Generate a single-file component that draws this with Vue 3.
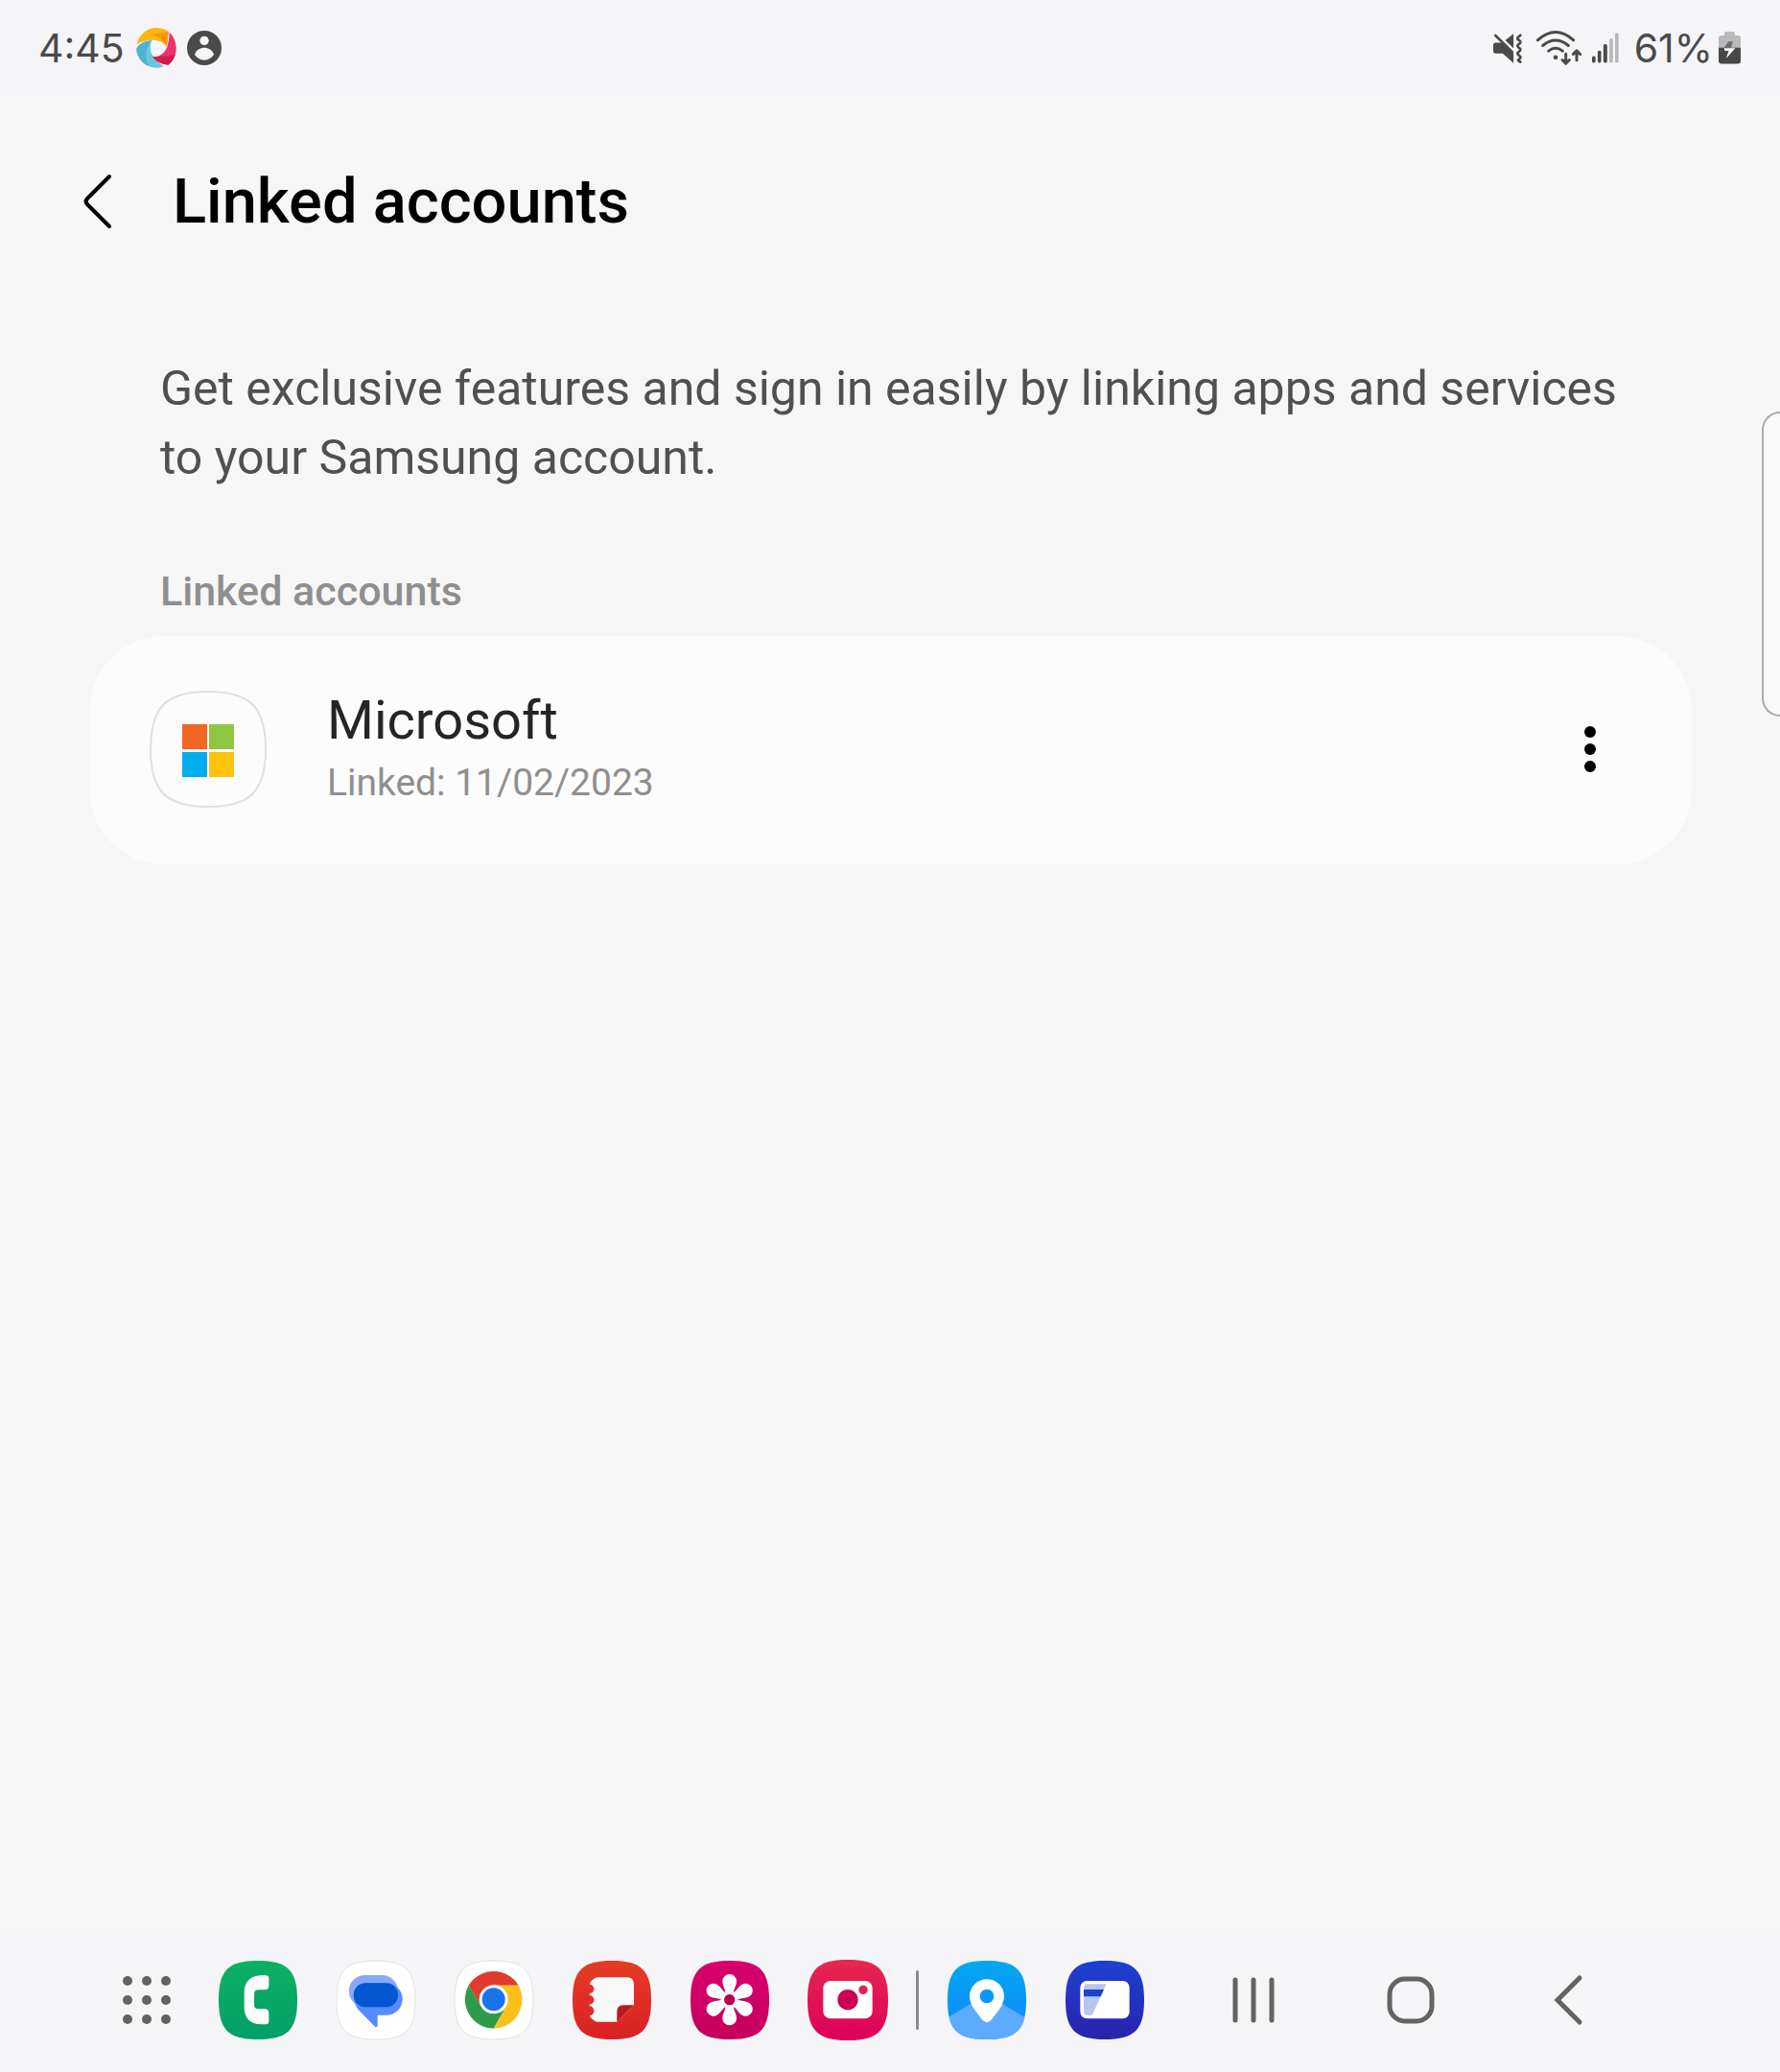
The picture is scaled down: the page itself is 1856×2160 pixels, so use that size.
<script setup>
const squircle = 'M123 0C216 0 246 30 246 123S216 246 123 246 0 216 0 123 30 0 123 0Z'
const petals = [0, 60, 120, 180, 240, 300]
const launcherDots = [5, 25, 45]
const account = { name: 'Microsoft', linked: 'Linked: 11/02/2023' }
</script>

<template>
  <div class="screen">
    <header class="status">
      <div class="status-left">
        <time class="status-text">4:45</time>
        <svg class="swirl" viewBox="0 0 126 126" aria-hidden="true">
          <path fill="#fbb811" d="M2 52C8 20 35 0 63 0 78 0 92 5 101 11 99 28 99 42 95 58 85 43 66 38 48 38 30 39 14 44 2 52Z" />
          <path fill="#fb960d" d="M46 22C66 16 86 14 101 11 99 28 99 42 95 58 88 40 70 26 46 22Z" />
          <path fill="#4fb3cd" d="M0 66C8 50 25 41 49 39 40 55 42 73 52 88 60 99 72 112 85 121 50 134 4 112 0 66Z" />
          <path fill="#6cc6dd" d="M49 39C40 55 42 73 52 88 60 99 72 112 85 121 68 127 52 124 38 118 26 92 30 60 49 39Z" />
          <path fill="#ee3168" d="M104 14C122 30 130 60 122 85 118 98 110 110 100 116 80 114 62 106 52 90 72 92 88 80 96 62 101 46 104 30 104 14Z" />
          <path fill="#d01f4c" d="M52 90C76 92 100 88 122 84 118 98 110 110 100 116 80 114 62 106 52 90Z" />
        </svg>
        <svg class="person" viewBox="0 0 108 108" aria-hidden="true">
          <circle cx="54" cy="54" r="54" fill="#4a4a4a" />
          <circle cx="54" cy="31" r="14" fill="#f5f5f8" />
          <path fill="#f5f5f8" d="M24 75C28 60 42 53 54 53S80 60 84 75C76 87 66 92 54 92S32 87 24 75Z" />
        </svg>
      </div>
      <div class="status-right">
        <svg class="mute" viewBox="0 0 91 92" aria-hidden="true">
          <path fill="#4a4a4a" d="M0 35Q0 28 7 28H27L64 62V92L30 62H7Q0 62 0 55ZM64 0V45L38 20Z" />
          <path d="M7 5 60 57M86 4 78 11Q75 15 79 18L84 22Q88 26 84 30L79 34Q75 38 79 42L84 46Q88 50 84 54L79 58Q75 62 79 66L84 70Q88 74 84 78L79 82Q77 84 86 89" fill="none" stroke="#4a4a4a" stroke-width="8" stroke-linecap="round" />
        </svg>
        <svg class="wifi" viewBox="0 0 141 107" aria-hidden="true">
          <g fill="none" stroke="#4a4a4a" stroke-width="9" stroke-linecap="round" stroke-linejoin="round">
            <path d="M4 29Q60-21 116 29M20 46Q60 13 100 46M38 63Q60 46 82 63" />
            <path d="M92 72V101M81 91 92 102 103 91M126 92V63M115 73 126 62 137 73" />
          </g>
          <circle cx="60" cy="83" r="7" fill="#4a4a4a" />
        </svg>
        <svg class="signal" viewBox="0 0 85 96" aria-hidden="true">
          <g fill="#4a4a4a">
            <rect x="0" y="74" width="11" height="21" rx="5" />
            <rect x="18" y="56" width="11" height="39" rx="5" />
            <rect x="36" y="36" width="12" height="59" rx="5" />
          </g>
          <g fill="#b8b8ba">
            <rect x="55" y="18" width="11" height="77" rx="5" />
            <rect x="73" y="0" width="11" height="95" rx="5" />
          </g>
        </svg>
        <span class="status-text percent">61%</span>
        <svg class="battery" viewBox="0 0 70 103" aria-hidden="true">
          <path fill="#b9b9bb" d="M18 12V6Q18 0 24 0H46Q52 0 52 6V12H60Q70 12 70 22V54H0V22Q0 12 10 12Z" />
          <path fill="#474747" d="M0 51H70V92Q70 102 60 102H10Q0 102 0 92Z" />
          <path fill="#6c6c6c" d="M31 31H45L39 52H17Z" />
          <path fill="#fff" d="M17 52H53L24 84 32 61H20Z" />
        </svg>
      </div>
    </header>

    <main class="content">
      <div class="title-row">
        <button class="back" type="button" aria-label="Navigate up">
          <svg viewBox="0 0 30 58" aria-hidden="true">
            <path d="M27 3 4 26Q1 29 4 32L27 55" fill="none" stroke="#000" stroke-width="4" stroke-linecap="round" />
          </svg>
        </button>
        <h1>Linked accounts</h1>
      </div>
      <p class="intro">Get exclusive features and sign in easily by linking apps and services to your Samsung account.</p>
      <h2>Linked accounts</h2>
      <section class="card">
        <svg class="brand" viewBox="0 0 122 122" aria-hidden="true">
          <path d="M61 1C105 1 121 17 121 61S105 121 61 121 1 105 1 61 17 1 61 1Z" fill="#fcfcfc" stroke="#dfdfdf" stroke-width="2" />
          <rect x="34" y="35" width="26" height="26" fill="#f36523" />
          <rect x="62" y="35" width="26" height="26" fill="#8dc63f" />
          <rect x="34" y="64" width="26" height="26" fill="#00adef" />
          <rect x="62" y="64" width="26" height="26" fill="#ffc20e" />
        </svg>
        <div class="account">
          <span class="name">{{ account.name }}</span>
          <span class="linked">{{ account.linked }}</span>
        </div>
        <button class="more" type="button" aria-label="More options">
          <svg viewBox="0 0 12 48" aria-hidden="true">
            <circle cx="6" cy="6" r="6" />
            <circle cx="6" cy="24" r="6" />
            <circle cx="6" cy="42" r="6" />
          </svg>
        </button>
      </section>
    </main>

    <div class="edge-handle"></div>

    <nav class="taskbar">
      <button class="launcher" type="button" aria-label="All apps">
        <svg viewBox="0 0 50 50" aria-hidden="true">
          <template v-for="y in launcherDots" :key="y">
            <circle v-for="x in launcherDots" :key="x" :cx="x" :cy="y" r="5" fill="#636363" />
          </template>
        </svg>
      </button>

      <div class="apps">
        <button class="app" type="button" aria-label="Phone">
          <svg viewBox="0 0 246 246" aria-hidden="true">
            <defs><linearGradient id="phone" x2="0" y2="1"><stop stop-color="#0bb161" /><stop offset="1" stop-color="#029f6a" /></linearGradient></defs>
            <path :d="squircle" fill="url(#phone)" />
            <path fill="#fff" d="M134 46H147Q157 46 157 56V78Q157 91 144 91H124Q111 91 111 104V138Q111 151 124 151H144Q157 151 157 164V189Q157 199 147 199H134C100 199 80 180 80 146V99C80 66 100 46 134 46Z" />
          </svg>
        </button>
        <button class="app" type="button" aria-label="Messages">
          <svg viewBox="0 0 246 246" aria-hidden="true">
            <path :d="squircle" fill="#fff" stroke="#e2e2e6" stroke-width="3" />
            <path fill="#86a9ff" d="M89 45H142A50 50 0 0 1 192 95V145H89L58 135A50 50 0 0 1 89 45Z" />
            <path fill="#578cff" d="M92 70H156A50 50 0 0 1 156 170H128V203Q127 210 120 206L67 152Q53 134 53 108Z" />
            <rect x="53" y="70" width="139" height="75" rx="37" fill="#0057cf" />
          </svg>
        </button>
        <button class="app" type="button" aria-label="Chrome">
          <svg viewBox="0 0 246 246" aria-hidden="true">
            <path :d="squircle" fill="#fff" stroke="#e2e2e6" stroke-width="3" />
            <path fill="#e03b2e" d="M44 77A91 91 0 0 1 200 77H122L83 143Z" />
            <path fill="#2a9c4a" d="M44 77A91 91 0 0 0 122 212L161 143 83 143Z" />
            <path fill="#fcc118" d="M200 77A91 91 0 0 1 122 212L161 143 122 77Z" />
            <circle cx="122" cy="121" r="45" fill="#fff" />
            <circle cx="122" cy="121" r="36" fill="#1a73e8" />
          </svg>
        </button>
        <button class="app" type="button" aria-label="Notes">
          <svg viewBox="0 0 246 246" aria-hidden="true">
            <defs><linearGradient id="notes" x2="0" y2="1"><stop stop-color="#e53c27" /><stop offset="1" stop-color="#da2124" /></linearGradient></defs>
            <path :d="squircle" fill="url(#notes)" />
            <path fill="#f9f9f9" d="M76 52H170Q192 52 192 74V139L139 191H76Q62 187 53 172C72 170 72 145 53 141V137C72 134 72 111 53 107V103C72 100 72 78 53 73Q62 56 76 52Z" />
            <path fill="#b51b20" d="M192 139H159Q139 139 139 159V191Z" />
          </svg>
        </button>
        <button class="app" type="button" aria-label="Gallery">
          <svg viewBox="0 0 246 246" aria-hidden="true">
            <defs><linearGradient id="gallery" x2="0" y2="1"><stop stop-color="#d8006f" /><stop offset="1" stop-color="#c6005c" /></linearGradient></defs>
            <path :d="squircle" fill="url(#gallery)" />
            <g transform="translate(122 122)" fill="#fff">
              <path v-for="angle in petals" :key="angle" :transform="`rotate(${angle})`" d="M-13-22C-14-36-22-44-22-58A22 22 0 0 1 22-58C22-44 14-36 13-22L0 0Z" />
              <circle r="25" />
              <circle r="17" fill="#b8004f" />
            </g>
          </svg>
        </button>
        <button class="app" type="button" aria-label="Camera">
          <svg viewBox="3 3 246 246" aria-hidden="true">
            <defs><linearGradient id="camera" x2="0" y2="1"><stop stop-color="#e8274f" /><stop offset="1" stop-color="#dc0059" /></linearGradient></defs>
            <path d="M126 0C221 0 252 31 252 126S221 252 126 252 0 221 0 126 31 0 126 0Z" fill="url(#camera)" />
            <rect x="49" y="66" width="154" height="118" rx="23" fill="#fff" />
            <circle cx="126" cy="125" r="32" fill="#cb004f" />
            <circle cx="174" cy="94" r="14" fill="#e6224f" />
          </svg>
        </button>
        <span class="divider"></span>
        <button class="app" type="button" aria-label="Find">
          <svg viewBox="0 0 246 246" aria-hidden="true">
            <defs>
              <linearGradient id="find" x2="0" y2="1"><stop stop-color="#02a9f0" /><stop offset="1" stop-color="#1484ff" /></linearGradient>
              <clipPath id="find-shape"><path :d="squircle" /></clipPath>
            </defs>
            <g clip-path="url(#find-shape)">
              <path d="M0 0H246V246H0Z" fill="url(#find)" />
              <path d="M0 178 123 105 246 180V246H0Z" fill="#5dabff" />
            </g>
            <path fill="#fff" d="M123 58C153 58 177 81 177 111 177 138 156 161 136 186Q123 198 110 186C90 161 69 138 69 111 69 81 93 58 123 58Z" />
            <circle cx="123" cy="111" r="22" fill="#0d98f8" />
          </svg>
        </button>
        <button class="app" type="button" aria-label="Wallet">
          <svg viewBox="0 0 246 246" aria-hidden="true">
            <defs><linearGradient id="wallet" x2="0" y2="1"><stop stop-color="#1c42d0" /><stop offset="1" stop-color="#2a22ad" /></linearGradient></defs>
            <path :d="squircle" fill="url(#wallet)" />
            <rect x="46" y="63" width="154" height="118" rx="21" fill="#fff" />
            <path fill="#b9c5ef" d="M69 73H128L83 170H69Q57 170 57 158V85Q57 73 69 73Z" />
            <path fill="#1c42d0" d="M57 90H120L110 112H57Z" />
          </svg>
        </button>
      </div>

      <div class="controls">
        <button type="button" aria-label="Recent apps">
          <svg width="44" height="46" viewBox="0 0 44 46" aria-hidden="true">
            <path d="M3 2V44M22 2V44M41 2V44" />
          </svg>
        </button>
        <button type="button" aria-label="Home">
          <svg width="48" height="48" viewBox="0 0 48 48" aria-hidden="true">
            <rect x="2" y="2" width="44" height="44" rx="16" />
          </svg>
        </button>
        <button type="button" aria-label="Back">
          <svg width="28" height="50" viewBox="0 0 28 50" aria-hidden="true">
            <path d="M26 2 3 25 26 48" />
          </svg>
        </button>
      </div>
    </nav>
  </div>
</template>

<style>
body {
  margin: 0;
  background: #f6f6f6;
}
</style>

<style scoped>
.screen {
  position: relative;
  display: flex;
  flex-direction: column;
  min-height: 100vh;
  background: #f6f6f6;
  font-family: Roboto, "Liberation Sans", sans-serif;
}

svg {
  display: block;
  overflow: visible;
}

button {
  display: flex;
  align-items: center;
  justify-content: center;
  margin: 0;
  padding: 0;
  border: 0;
  background: none;
}

.status {
  display: flex;
  align-items: center;
  justify-content: space-between;
  height: 100px;
  padding: 0 41px;
  background: #f5f5f8;
}

.status-left,
.status-right {
  display: flex;
  align-items: center;
}

.status-text {
  color: #4a4a4a;
  font-family: Inter, Roboto, sans-serif;
  font-size: 41px;
  font-weight: 400;
  line-height: 50px;
}

.status-left {
  margin-left: -1px;
}

.swirl {
  width: 42px;
  height: 42px;
  margin: 0 11px 0 12px;
}

.person {
  width: 36px;
  height: 36px;
}

.mute {
  width: 30px;
  height: 31px;
  margin-right: 15px;
}

.wifi {
  width: 47px;
  height: 36px;
  margin-right: 11px;
}

.signal {
  width: 28px;
  height: 32px;
  margin-right: 16px;
}

.percent {
  margin-right: 6px;
}

.battery {
  width: 23px;
  height: 34px;
}

.content {
  padding: 60px 92px 0 93px;
}

.title-row {
  display: flex;
  align-items: center;
  height: 100px;
}

.back {
  width: 87px;
  height: 100px;
  justify-content: flex-start;
}

.back svg {
  width: 30px;
  height: 58px;
  margin-left: -6px;
}

h1 {
  margin: 0;
  color: #000;
  font-size: 65px;
  font-weight: 500;
  line-height: 100px;
}

.intro {
  margin: 109px 76px 0 74px;
  color: #505050;
  font-size: 50px;
  line-height: 72px;
}

h2 {
  margin: 78px 74px 22px;
  color: #8f8f8f;
  font-size: 43px;
  font-weight: 500;
  line-height: 50px;
}

.card {
  display: flex;
  align-items: center;
  box-sizing: border-box;
  height: 238px;
  padding: 0 64px 2px 63px;
  border-radius: 78px;
  background: #fcfcfc;
}

.brand {
  flex: none;
  width: 122px;
  height: 122px;
}

.account {
  display: flex;
  flex: 1;
  flex-direction: column;
  margin-left: 63px;
}

.name {
  color: #252525;
  font-size: 56px;
  line-height: 70px;
}

.linked {
  color: #8f8f8f;
  font-size: 39px;
  line-height: 60px;
}

.more {
  width: 84px;
  height: 100px;
}

.more svg {
  width: 12px;
  height: 48px;
}

.edge-handle {
  position: absolute;
  top: 429px;
  right: 0;
  box-sizing: border-box;
  width: 19px;
  height: 318px;
  border: 2px solid #ababab;
  border-right: 0;
  border-radius: 20px 0 0 20px;
  background: #f8f8f8;
}

.taskbar {
  display: flex;
  align-items: center;
  height: 150px;
  margin-top: auto;
  padding: 0 128px;
  background: #f5f5f8;
}

.launcher {
  width: 50px;
  height: 82px;
  margin-right: 50px;
}

.launcher svg {
  width: 50px;
  height: 50px;
}

.apps {
  display: flex;
  align-items: center;
  gap: 41px;
}

.app svg {
  width: 82px;
  height: 82px;
}

.divider {
  width: 3px;
  height: 62px;
  margin: 0 -11px;
  border-radius: 2px;
  background: #8b8b8d;
}

.controls {
  display: flex;
  margin-left: 32px;
}

.controls button {
  width: 164px;
  height: 82px;
}

.controls svg {
  fill: none;
  stroke: #636363;
  stroke-width: 5;
  stroke-linecap: round;
}
</style>
